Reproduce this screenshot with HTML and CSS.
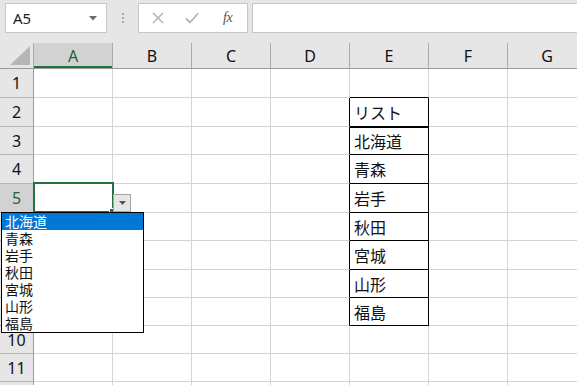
FILE: index.html
```html
<!DOCTYPE html>
<html lang="ja">
<head>
<meta charset="utf-8">
<link rel="stylesheet" href="styles.css">
</head>
<body>
<div class="app">
  <div class="toolbar">
    <div class="namebox">
      <span class="nb-text">A5</span>
      <svg class="nb-arrow" width="8" height="5" viewBox="0 0 8 5"><path d="M0 0H8L4 4.5Z" fill="#6b6b6b"/></svg>
    </div>
    <div class="grip">
      <span class="dot"></span><span class="dot"></span><span class="dot"></span>
    </div>
    <div class="fbtns">
      <svg class="fb-x" width="12" height="12" viewBox="0 0 12 12"><path d="M1 1L11 11M11 1L1 11" stroke="#b4b4b4" stroke-width="1.5"/></svg>
      <svg class="fb-ok" width="14" height="12" viewBox="0 0 14 12"><path d="M1 6.5L5 10.5L13 1.5" stroke="#b4b4b4" stroke-width="1.8" fill="none"/></svg>
      <span class="fb-fx">fx</span>
    </div>
    <div class="finput"></div>
  </div>

  <div class="sheet">
    <div class="grid">
      <div class="corner"><svg width="20" height="19" viewBox="0 0 20 19"><path d="M20 0V19H0Z" fill="#b6b6b6"/></svg></div>
      <div class="ch sel">A</div><div class="ch">B</div><div class="ch">C</div><div class="ch">D</div><div class="ch">E</div><div class="ch">F</div><div class="ch">G</div>

      <div class="rh">1</div><div class="c"></div><div class="c"></div><div class="c"></div><div class="c"></div><div class="c bb"></div><div class="c"></div><div class="c"></div>
      <div class="rh">2</div><div class="c"></div><div class="c"></div><div class="c"></div><div class="c br"></div><div class="c bx">リスト</div><div class="c"></div><div class="c"></div>
      <div class="rh">3</div><div class="c"></div><div class="c"></div><div class="c"></div><div class="c br"></div><div class="c bx thick">北海道</div><div class="c"></div><div class="c"></div>
      <div class="rh">4</div><div class="c"></div><div class="c"></div><div class="c"></div><div class="c br"></div><div class="c bx">青森</div><div class="c"></div><div class="c"></div>
      <div class="rh sel">5</div><div class="c"></div><div class="c"></div><div class="c"></div><div class="c br"></div><div class="c bx">岩手</div><div class="c"></div><div class="c"></div>
      <div class="rh">6</div><div class="c"></div><div class="c"></div><div class="c"></div><div class="c br"></div><div class="c bx">秋田</div><div class="c"></div><div class="c"></div>
      <div class="rh">7</div><div class="c"></div><div class="c"></div><div class="c"></div><div class="c br"></div><div class="c bx">宮城</div><div class="c"></div><div class="c"></div>
      <div class="rh">8</div><div class="c"></div><div class="c"></div><div class="c"></div><div class="c br"></div><div class="c bx">山形</div><div class="c"></div><div class="c"></div>
      <div class="rh">9</div><div class="c"></div><div class="c"></div><div class="c"></div><div class="c br"></div><div class="c bx">福島</div><div class="c"></div><div class="c"></div>
      <div class="rh">10</div><div class="c"></div><div class="c"></div><div class="c"></div><div class="c"></div><div class="c"></div><div class="c"></div><div class="c"></div>
      <div class="rh">11</div><div class="c"></div><div class="c"></div><div class="c"></div><div class="c"></div><div class="c"></div><div class="c"></div><div class="c"></div>
      <div class="rh"></div><div class="c"></div><div class="c"></div><div class="c"></div><div class="c"></div><div class="c"></div><div class="c"></div><div class="c"></div>
    </div>

    <div class="selection"></div>
    <div class="handle"></div>
    <div class="ddbtn"><svg width="7" height="4" viewBox="0 0 7 4"><path d="M0 0H7L3.5 4Z" fill="#555"/></svg></div>
    <ul class="list">
      <li class="on">北海道</li>
      <li>青森</li>
      <li>岩手</li>
      <li>秋田</li>
      <li>宮城</li>
      <li>山形</li>
      <li>福島</li>
    </ul>
  </div>
</div>
</body>
</html>
```

FILE: styles.css
```css
* { box-sizing: border-box; }
html, body { margin: 0; padding: 0; }
body {
  width: 577px;
  height: 385px;
  overflow: hidden;
  background: #e6e6e6;
  font-family: "Noto Sans CJK JP", "Noto Sans", sans-serif;
  color: #000;
}
.app { display: flex; flex-direction: column; width: 577px; height: 385px; }

.toolbar {
  height: 43px;
  display: flex;
  align-items: flex-start;
  padding-top: 3px;
  padding-left: 5px;
  background-color: #e6e6e6;
}
.namebox {
  width: 102px;
  height: 30px;
  background: #fff;
  border: 1px solid #c6c6c6;
  display: flex;
  align-items: center;
  justify-content: space-between;
  padding: 0 9px 0 7px;
}
.nb-text { font-family: "Noto Sans", sans-serif; font-size: 15px; color: #222; }
.nb-arrow { display: block; }
.grip {
  width: 31px;
  height: 30px;
  display: flex;
  flex-direction: column;
  align-items: center;
  justify-content: center;
  gap: 2px;
}
.dot { width: 2px; height: 2px; background: #a8a8a8; display: block; }
.fbtns {
  width: 110px;
  height: 30px;
  background: #fff;
  border: 1px solid #c6c6c6;
  display: flex;
  align-items: center;
  padding-left: 13px;
}
.fb-x { display: block; }
.fb-ok { display: block; margin-left: 21px; }
.fb-fx {
  margin-left: 24px;
  font-family: "Liberation Serif", serif;
  font-style: italic;
  font-size: 14px;
  color: #555;
  letter-spacing: -0.5px;
}
.finput {
  flex: 1;
  height: 30px;
  margin-left: 4px;
  margin-right: -2px;
  background: #fff;
  border: 1px solid #c6c6c6;
}

.sheet { position: relative; flex: 1; overflow: hidden; background: #fff; }
.grid {
  display: grid;
  grid-template-columns: 34px repeat(7, 79px);
  grid-template-rows: 26px 29px 29px 28px 29px 29px 28px 29px 28px 28px 28px 28px 28px;
}
.corner {
  background: #e6e6e6;
  border-right: 1px solid #ababab;
  border-bottom: 1px solid #9b9b9b;
  display: flex;
  align-items: flex-end;
  justify-content: flex-end;
  padding: 0 3px 3px 0;
}
.corner svg { display: block; }
.ch {
  background: #e6e6e6;
  border-right: 1px solid #ababab;
  border-bottom: 1px solid #9b9b9b;
  display: flex;
  align-items: center;
  justify-content: center;
  font-family: "Noto Sans", sans-serif;
  font-size: 16px;
  color: #111;
}
.ch.sel { background: #d2d2d2; color: #1f5f3c; box-shadow: inset 0 -2px 0 #217346; }
.rh {
  background: #e6e6e6;
  border-right: 1px solid #9b9b9b;
  border-bottom: 1px solid #b5b5b5;
  display: flex;
  align-items: center;
  justify-content: center;
  font-family: "Noto Sans", sans-serif;
  font-size: 16px;
  color: #111;
}
.rh.sel { background: #d2d2d2; color: #1f5f3c; }
.c {
  border-right: 1px solid #d4d4d4;
  border-bottom: 1px solid #d4d4d4;
  background: #fff;
  display: flex;
  align-items: center;
  padding-left: 4px;
  font-size: 16px;
  color: #111;
}
.c.bb { border-bottom-color: #000; }
.c.br { border-right-color: #000; }
.c.bx { border-right-color: #000; border-bottom-color: #000; }
.c.thick { box-shadow: inset 0 1px 0 #000; }

.selection {
  position: absolute;
  left: 33px;
  top: 139px;
  width: 81px;
  height: 31px;
  border: 2px solid #217346;
}
.handle {
  position: absolute;
  left: 109px;
  top: 165px;
  width: 6px;
  height: 6px;
  background: #217346;
  border: 1px solid #fff;
}
.ddbtn {
  position: absolute;
  left: 113px;
  top: 151px;
  width: 18px;
  height: 18px;
  background: #e6e6e6;
  border: 1px solid #a6a6a6;
  display: flex;
  align-items: center;
  justify-content: center;
}
.ddbtn svg { display: block; }
.list {
  position: absolute;
  left: 1px;
  top: 169px;
  width: 143px;
  height: 121px;
  margin: 0;
  padding: 0;
  list-style: none;
  background: #fff;
  border: 1px solid #000;
}
.list li {
  height: 17px;
  line-height: 17px;
  padding-left: 3px;
  font-size: 14px;
  color: #111;
}
.list li.on { background: #0078d7; color: #fff; }
```
